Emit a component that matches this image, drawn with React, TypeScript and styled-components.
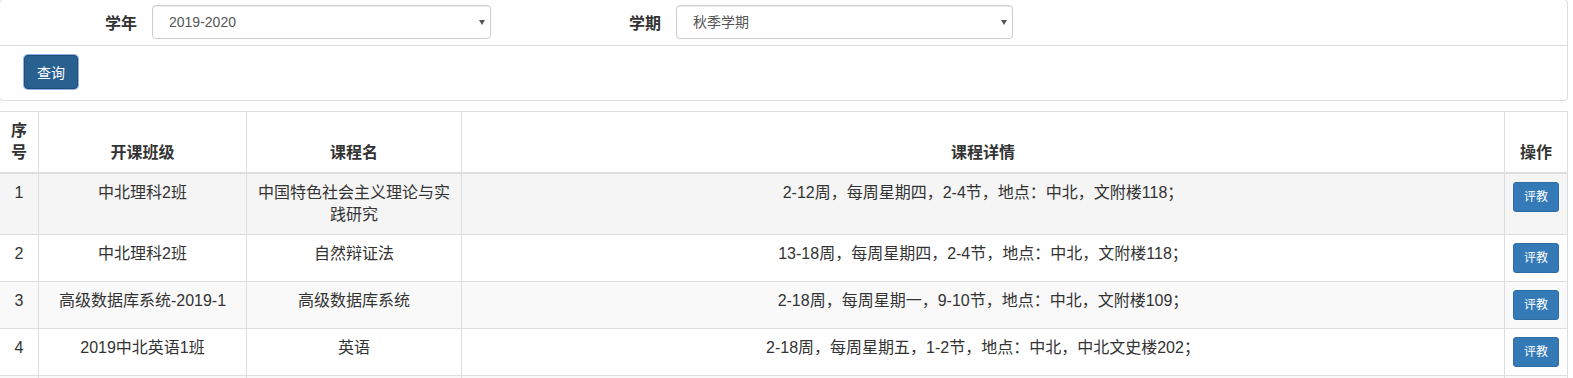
import React from 'react';
import styled, { createGlobalStyle } from 'styled-components';

const GlobalStyle = createGlobalStyle`
  html, body {
    margin: 0;
    padding: 0;
    background: #fff;
    overflow: hidden;
  }
  body {
    font-family: "Liberation Sans", "Noto Sans CJK SC", sans-serif;
    font-size: 14px;
    color: #333;
  }
`;

const Page = styled.div`
  margin: -1px 5px 0 -1px;
`;

const Panel = styled.div`
  border: 1px solid #ddd;
  border-radius: 4px;
  background: #fff;
`;

const FilterRow = styled.div`
  display: flex;
  align-items: center;
  gap: 15px;
  padding: 5px 0 6px;
  border-bottom: 1px solid #ddd;
`;

const Label = styled.label<{ $w: number }>`
  width: ${(p) => p.$w}px;
  text-align: right;
  font-size: 16px;
  font-weight: bold;
  color: #333;
`;

const SelectWrap = styled.div<{ $w: number }>`
  position: relative;
  width: ${(p) => p.$w}px;
  height: 34px;
`;

const Select = styled.select`
  appearance: none;
  -webkit-appearance: none;
  width: 100%;
  height: 34px;
  box-sizing: border-box;
  padding: 0 12px 0 16px;
  border: 1px solid #ccc;
  border-radius: 4px;
  background: #fff;
  color: #555;
  font-family: "Liberation Sans", "Noto Sans CJK SC", sans-serif;
  font-size: 14px;
  box-shadow: inset 0 1px 1px rgba(0, 0, 0, 0.075);
  outline: none;
`;

const Caret = styled.span`
  position: absolute;
  right: 6px;
  top: 15px;
  width: 0;
  height: 0;
  border-left: 3.5px solid transparent;
  border-right: 3.5px solid transparent;
  border-top: 5px solid #555;
  pointer-events: none;
`;

const ActionRow = styled.div`
  padding: 9px 24px 11px;
`;

const QueryButton = styled.button`
  height: 34px;
  padding: 0 12px;
  border: 1px solid #204d74;
  border-radius: 4px;
  background: #286090;
  color: #fff;
  font-family: "Liberation Sans", "Noto Sans CJK SC", sans-serif;
  font-size: 14px;
  box-shadow: 0 0 0 1px #8fb4ee;
  cursor: pointer;
`;

const Table = styled.table`
  width: 100%;
  margin-top: 10px;
  border-collapse: collapse;
  table-layout: fixed;
  border: 1px solid #ddd;
  font-size: 16px;
  line-height: 22px;
  color: #333;
`;

const Th = styled.th`
  padding: 8px;
  border: 1px solid #ddd;
  border-bottom: 2px solid #ddd;
  text-align: center;
  vertical-align: bottom;
  font-weight: bold;
`;

const Row = styled.tr<{ $bg: string }>`
  background: ${(p) => p.$bg};
`;

const Td = styled.td`
  padding: 8px;
  border: 1px solid #ddd;
  text-align: center;
  vertical-align: top;
`;

const RateButton = styled.button`
  display: inline-block;
  vertical-align: top;
  height: 30px;
  padding: 0 10px;
  border: 1px solid #2e6da4;
  border-radius: 3px;
  background: #337ab7;
  color: #fff;
  font-family: "Liberation Sans", "Noto Sans CJK SC", sans-serif;
  font-size: 12px;
  line-height: 18px;
  cursor: pointer;
`;

const courses = [
  { id: 1, cls: '中北理科2班', name: '中国特色社会主义理论与实践研究', detail: '2-12周，每周星期四，2-4节，地点：中北，文附楼118；' },
  { id: 2, cls: '中北理科2班', name: '自然辩证法', detail: '13-18周，每周星期四，2-4节，地点：中北，文附楼118；' },
  { id: 3, cls: '高级数据库系统-2019-1', name: '高级数据库系统', detail: '2-18周，每周星期一，9-10节，地点：中北，文附楼109；' },
  { id: 4, cls: '2019中北英语1班', name: '英语', detail: '2-18周，每周星期五，1-2节，地点：中北，中北文史楼202；' },
  { id: 5, cls: '中北理科2班', name: '数值分析', detail: '2-18周，每周星期二，3-4节，地点：中北，文附楼118；' },
];

const rowBg = (i: number) => (i === 0 ? '#f5f5f5' : i % 2 === 0 ? '#f9f9f9' : '#fff');

const App = () => {
  return (
    <Page>
      <GlobalStyle />
      <Panel>
        <FilterRow>
          <Label $w={137}>学年</Label>
          <SelectWrap $w={339}>
            <Select defaultValue="2019-2020">
              <option>2019-2020</option>
              <option>2018-2019</option>
            </Select>
            <Caret />
          </SelectWrap>
          <Label $w={155}>学期</Label>
          <SelectWrap $w={337}>
            <Select defaultValue="秋季学期">
              <option>秋季学期</option>
              <option>春季学期</option>
            </Select>
            <Caret />
          </SelectWrap>
        </FilterRow>
        <ActionRow>
          <QueryButton>查询</QueryButton>
        </ActionRow>
      </Panel>

      <Table>
        <colgroup>
          <col style={{ width: 39 }} />
          <col style={{ width: 208 }} />
          <col style={{ width: 215 }} />
          <col />
          <col style={{ width: 63 }} />
        </colgroup>
        <thead>
          <tr>
            <Th>序号</Th>
            <Th>开课班级</Th>
            <Th>课程名</Th>
            <Th>课程详情</Th>
            <Th>操作</Th>
          </tr>
        </thead>
        <tbody>
          {courses.map((c, i) => (
            <Row key={c.id} $bg={rowBg(i)}>
              <Td>{c.id}</Td>
              <Td>{c.cls}</Td>
              <Td>{c.name}</Td>
              <Td>{c.detail}</Td>
              <Td>
                <RateButton>评教</RateButton>
              </Td>
            </Row>
          ))}
        </tbody>
      </Table>
    </Page>
  );
};

export default App;
